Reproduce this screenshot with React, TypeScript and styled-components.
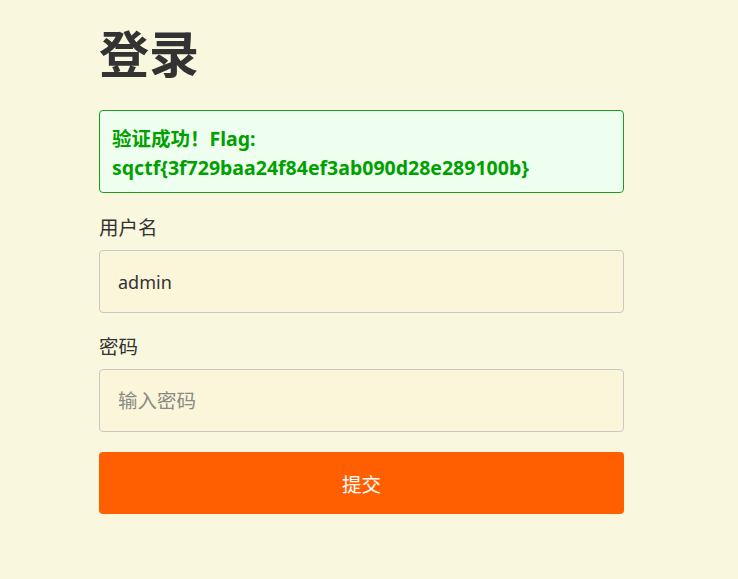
import React from 'react';
import styled, { createGlobalStyle } from 'styled-components';

const GlobalStyle = createGlobalStyle`
    html, body {
        margin: 0;
        padding: 0;
        background: #f9f8de;
        font-family: "Noto Sans", "Noto Sans CJK SC", sans-serif;
        color: #333;
    }
`;

const Page = styled.div`
    width: 525px;
    margin-left: 99px;
    padding-top: 18px;
`;

const Title = styled.h1`
    margin: 0 0 26px;
    font-size: 50px;
    line-height: 66px;
    font-weight: 700;
    color: #333;
    font-family: "Noto Sans CJK SC", sans-serif;
`;

const Alert = styled.div`
    box-sizing: border-box;
    height: 83px;
    border: 1px solid #1f9a1f;
    border-radius: 4px;
    background: #efffef;
    color: #00a000;
    font-weight: 700;
    font-size: 19.5px;
    line-height: 29px;
    padding: 13px 12px 9px;
    margin-bottom: 21px;
`;

const Field = styled.div`
    display: flex;
    flex-direction: column;
    margin-bottom: 20px;
`;

const Label = styled.label`
    font-size: 19.5px;
    line-height: 27px;
    margin-bottom: 9px;
    color: #333;
`;

const Input = styled.input`
    box-sizing: border-box;
    height: 63px;
    width: 100%;
    border: 1px solid #c9c9c4;
    border-radius: 4px;
    background: #fbf6d9;
    padding: 0 18px;
    font-size: 18px;
    font-family: "Noto Sans", "Noto Sans CJK SC", sans-serif;
    color: #333;
    outline: none;

    &::placeholder {
        color: #8a8a86;
        font-size: 19.5px;
    }
`;

const Submit = styled.button`
    display: block;
    width: 100%;
    height: 62px;
    border: none;
    border-radius: 4px;
    background: #ff5f00;
    color: #fff;
    font-size: 19.5px;
    font-family: "Noto Sans CJK SC", sans-serif;
    cursor: pointer;
`;

export default function App() {
    return (
        <>
            <GlobalStyle />
            <Page>
                <Title>登录</Title>
                <Alert>
                    验证成功！Flag: sqctf{'{'}3f729baa24f84ef3ab090d28e289100b{'}'}
                </Alert>
                <Field>
                    <Label>用户名</Label>
                    <Input type='text' defaultValue='admin' />
                </Field>
                <Field>
                    <Label>密码</Label>
                    <Input type='password' placeholder='输入密码' />
                </Field>
                <Submit>提交</Submit>
            </Page>
        </>
    );
}
